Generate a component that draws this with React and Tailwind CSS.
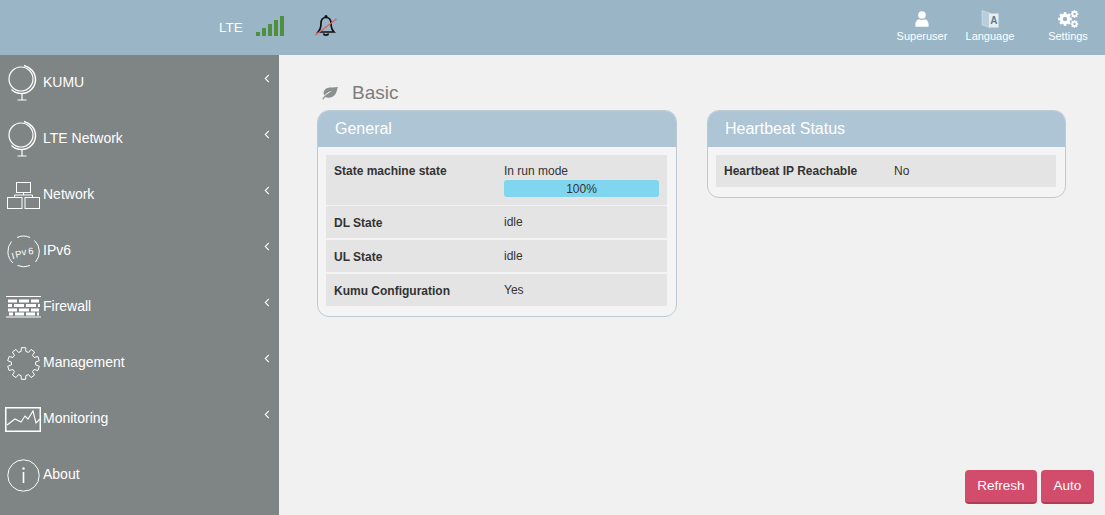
const F = { fontFamily: '"Liberation Sans", Arial, sans-serif' };

function Globe() {
  return (
    <svg width="30" height="38" viewBox="0 0 30 38" fill="none" stroke="#fff" strokeWidth="1.2">
      <circle cx="13" cy="15" r="12" />
      <path d="M16 1.500c6 1.500 11.500 6.500 11.500 14 0 8-6.500 14-14 14-4 0-7.500-1.500-10-4" strokeWidth="1.500" />
      <path d="M14 29.500V36M9.500 36h9" />
    </svg>
  );
}
function NetworkIcon() {
  return (
    <svg width="33" height="27" viewBox="0 0 33 27" fill="none" stroke="#fff" strokeWidth="1">
      <rect x="9.500" y="0.500" width="14" height="10" />
      <rect x="0.500" y="15.500" width="14.500" height="11" />
      <rect x="18" y="15.500" width="14.500" height="11" />
      <path d="M16.500 10.500v2.500M7.500 15.500V13h18v2.500" />
    </svg>
  );
}
function Ipv6Icon() {
  return (
    <svg width="33" height="33" viewBox="0 0 33 33" fill="none" stroke="#fff" strokeWidth="1">
      <path d="M10 2.500A15.500 15.500 0 0 1 23 2.500M27.500 5.500A15.500 15.500 0 0 1 28.500 27M23 30.500A15.500 15.500 0 0 1 10.500 30.500M6 28A15.500 15.500 0 0 1 4.500 6.500" />
      <text x="5.500 9 15 21.500" y="24.500 23 20.500 19.500" rotate="-14 -12 -8 -5" fill="#fff" stroke="none" fontSize="9.500" style={F}>IPv6</text>
    </svg>
  );
}
function FirewallIcon() {
  return (
    <svg width="36" height="22" viewBox="0 0 36 22">
      <rect x="0" y="0" width="35" height="1" fill="#fff" />
      <rect x="0" y="20.500" width="35" height="1" fill="#fff" />
      <g fill="#fff">
        <rect x="2" y="3.500" width="9" height="3" /><rect x="13" y="3.500" width="10" height="3" /><rect x="25" y="3.500" width="8" height="3" />
        <rect x="2" y="8" width="4" height="3" /><rect x="8" y="8" width="10" height="3" /><rect x="20" y="8" width="10" height="3" /><rect x="32" y="8" width="2" height="3" />
        <rect x="2" y="12.500" width="9" height="3" /><rect x="13" y="12.500" width="10" height="3" /><rect x="25" y="12.500" width="8" height="3" />
        <rect x="3" y="16.500" width="4" height="3" /><rect x="9" y="16.500" width="9" height="3" /><rect x="20" y="16.500" width="9" height="3" /><rect x="31" y="16.500" width="2" height="3" />
      </g>
    </svg>
  );
}
function GearOutline() {
  const pts = [];
  const n = 10, cx = 16.5, cy = 16.5, ro = 16, ri = 12.2;
  for (let i = 0; i < n; i++) {
    const a = (i / n) * Math.PI * 2 - Math.PI / 2;
    const w = 0.14, g = 0.2;
    const p = (r, t) => `${(cx + r * Math.cos(t)).toFixed(1)},${(cy + r * Math.sin(t)).toFixed(1)}`;
    pts.push(p(ri, a - g), p(ro, a - w), p(ro, a + w), p(ri, a + g));
  }
  return (
    <svg width="33" height="33" viewBox="0 0 33 33" fill="none" stroke="#fff" strokeWidth="1">
      <polygon points={pts.join(" ")} />
    </svg>
  );
}
function MonitorIcon() {
  return (
    <svg width="36" height="25" viewBox="0 0 36 25" fill="none" stroke="#fff">
      <rect x="0.750" y="0.750" width="34.500" height="23.500" strokeWidth="1.500" />
      <path d="M2 18l8-6 6 3 4-6 3 3 5-8 3 12 4-4" strokeWidth="1.100" />
    </svg>
  );
}
function InfoIcon() {
  return (
    <svg width="33" height="33" viewBox="0 0 33 33" fill="none" stroke="#fff">
      <circle cx="16.500" cy="16.500" r="15.700" strokeWidth="1" />
      <circle cx="16.500" cy="9.500" r="1.200" fill="#fff" stroke="none" />
      <rect x="15.700" y="13" width="1.600" height="11" fill="#fff" stroke="none" />
    </svg>
  );
}
function Chevron() {
  return (
    <svg width="7" height="9" viewBox="0 0 7 9" fill="none" stroke="#fff" strokeWidth="1.100">
      <path d="M4.800 0.800L1.300 4.500l3.500 3.700" />
    </svg>
  );
}
function SignalBars() {
  return (
    <svg width="30" height="21" viewBox="0 0 30 21" fill="#4f8f3f">
      <rect x="1" y="16" width="4" height="4" />
      <rect x="7" y="12" width="4" height="8" />
      <rect x="13" y="8" width="4" height="12" />
      <rect x="19" y="4" width="4" height="16" />
      <rect x="25" y="0" width="4" height="20" />
    </svg>
  );
}
function BellOff() {
  return (
    <svg width="24" height="24" viewBox="0 0 24 24" fill="none">
      <path d="M12 3.500c-3.500 0-5 2.800-5 6 0 4-1 6.500-3 8.500h16c-2-2-3-4.500-3-8.500 0-3.200-1.500-6-5-6z" stroke="#111" strokeWidth="1.700" />
      <circle cx="12" cy="2.500" r="1.500" fill="#111" />
      <path d="M9.500 19.500c.5 2.200 4.500 2.200 5 0" stroke="#111" strokeWidth="1.700" />
      <path d="M1.500 21L22.500 5" stroke="#d9605f" strokeWidth="1.500" />
    </svg>
  );
}
function UserIcon() {
  return (
    <svg width="14" height="16" viewBox="0 0 14 16" fill="#fff">
      <circle cx="7" cy="4" r="3.800" />
      <path d="M0.500 15.700c-.6-5 1.500-7.200 3.500-7.500 1.800 1 4.200 1 6 0 2 .3 4.100 2.500 3.500 7.500z" />
    </svg>
  );
}
function LangIcon() {
  return (
    <svg width="18" height="18" viewBox="0 0 18 18">
      <path d="M1 0.500l8 2.500v14.500l-8-2.500z" fill="#b8cfdb" stroke="#dfe9ee" strokeWidth="0.500" />
      <path d="M8 3.500h9.500v14H8z" fill="#e6eef2" />
      <text x="12.800" y="13.500" fontSize="10" fontWeight="700" textAnchor="middle" fill="#5f7a8a" style={F}>A</text>
    </svg>
  );
}
function GearsIcon() {
  const gear = (cx, cy, r, key) => (
    <g key={key}>
      <circle cx={cx} cy={cy} r={r * 0.55} fill="none" stroke="#fff" strokeWidth={r * 0.45} />
      {[0, 45, 90, 135].map((a) => (
        <rect key={a} x={cx - r * 0.2} y={cy - r} width={r * 0.4} height={r * 2} fill="#fff" transform={`rotate(${a} ${cx} ${cy})`} />
      ))}
      <circle cx={cx} cy={cy} r={r * 0.32} fill="#9ab6c6" />
    </g>
  );
  return (
    <svg width="21" height="18" viewBox="0 0 21 18">
      {gear(7, 9, 6.800, "a")}
      {gear(16.500, 4, 3.800, "b")}
      {gear(16.500, 14, 3.800, "c")}
    </svg>
  );
}
function Leaf() {
  return (
    <svg width="18" height="14" viewBox="0 0 18 14" fill="#8a8f8f">
      <path d="M17 .8c-4.500 1.500-10-.5-13 2.700C2 5.700 2.300 8 3.500 9.300 6 6.500 9 5.200 11.500 4.500 9 6 6 8 3 10.500L1.200 13l1 .6 2-2.500c3 1.500 7 .8 9.500-2C15.800 6.800 16 3.500 17 .8z" />
    </svg>
  );
}

const NAV = [
  ["KUMU", <Globe />, true, "pl-[8px]"],
  ["LTE Network", <Globe />, true, "pl-[8px]"],
  ["Network", <NetworkIcon />, true, "pl-[7px]"],
  ["IPv6", <Ipv6Icon />, true, "pl-[7px]"],
  ["Firewall", <FirewallIcon />, true, "pl-[6px]"],
  ["Management", <GearOutline />, true, "pl-[7px]"],
  ["Monitoring", <MonitorIcon />, true, "pl-[5px]"],
  ["About", <InfoIcon />, false, "pl-[7px]"],
];

function NavItem({ label, icon, chevron, pad }) {
  return (
    <div className={`relative flex h-14 items-center ${pad}`}>
      <div className="flex shrink-0">{icon}</div>
      <span className="absolute left-[43px] top-[18px] text-[14px] leading-[18px] text-white">{label}</span>
      {chevron && (
        <span className="absolute right-[8px] top-[19px] flex">
          <Chevron />
        </span>
      )}
    </div>
  );
}

function TopAction({ icon, label, className }) {
  return (
    <div className={`flex flex-col items-center ${className}`}>
      <div className="flex h-[19px] items-center">{icon}</div>
      <span className="mt-[1px] text-[11px] leading-[14px] text-white">{label}</span>
    </div>
  );
}

function Row({ name, value, children, tall, offset, gap }) {
  return (
    <div className={`flex bg-[#e4e4e4] ${tall ? "h-[50px]" : "h-[32px]"} ${gap}`}>
      <div className={`w-[178px] shrink-0 pl-2 text-[12px] font-bold leading-[16px] text-[#333] ${offset ? "pt-[9px]" : "pt-[8px]"}`}>{name}</div>
      <div className="w-[155px] pt-[8px] text-[12px] leading-[16px] text-[#333]">
        {value}
        {children}
      </div>
    </div>
  );
}

function Panel({ title, className, children }) {
  return (
    <div className={`overflow-hidden rounded-[12px] border border-[#bccbd3] bg-[#f4f4f4] ${className}`}>
      <div className="flex h-[36px] items-center bg-[#aec5d5] pl-[17px] text-[16px] text-white">{title}</div>
      <div className="pb-[10px] pl-2 pr-[9px] pt-[8px]">{children}</div>
    </div>
  );
}

export default function App() {
  return (
    <div className="flex h-[515px] w-[1105px] flex-col overflow-hidden bg-[#f1f1f1]" style={F}>
      <header className="flex h-[55px] shrink-0 items-start bg-[#9ab6c6]">
        <span className="ml-[219px] mt-[20px] w-[26px] text-[13.500px] leading-[16px] text-white">LTE</span>
        <span className="ml-[10px] mt-[16px] flex"><SignalBars /></span>
        <span className="ml-[29px] mt-[14px] flex"><BellOff /></span>
        <div className="ml-auto mr-[16px] mt-[9px] flex">
          <TopAction icon={<UserIcon />} label="Superuser" className="w-[52px]" />
          <TopAction icon={<LangIcon />} label="Language" className="ml-[17px] w-[50px]" />
          <TopAction icon={<GearsIcon />} label="Settings" className="ml-[32px] w-[42px]" />
        </div>
      </header>
      <div className="flex min-h-0 flex-1">
        <aside className="w-[279px] shrink-0 bg-[#7f8484]">
          {NAV.map(([label, icon, chevron, pad]) => (
            <NavItem key={label} label={label} icon={icon} chevron={chevron} pad={pad} />
          ))}
        </aside>
        <main className="flex flex-1 flex-col pl-[38px] pr-[11px]">
          <div className="flex h-[55px] shrink-0 items-start pl-[4px] pt-[30px]">
            <span className="mt-[1px] flex"><Leaf /></span>
            <span className="ml-[13px] mt-[-4px] text-[19px] leading-[24px] text-[#7d7d7d]">Basic</span>
          </div>
          <div className="flex items-start gap-[30px]">
            <Panel title="General" className="w-[360px]">
              <Row name="State machine state" value="In run mode" tall gap="mb-[1px]">
                <div className="mt-px flex h-[17px] w-[155px] items-center justify-center rounded-[3px] bg-[#7fd6ee] text-[12px] text-[#333]">100%</div>
              </Row>
              <Row name="DL State" value="idle" offset gap="mb-[2px]" />
              <Row name="UL State" value="idle" offset gap="mb-[2px]" />
              <Row name="Kumu Configuration" value="Yes" offset />
            </Panel>
            <Panel title="Heartbeat Status" className="w-[359px]">
              <Row name="Heartbeat IP Reachable" value="No" />
            </Panel>
          </div>
          <div className="mb-[11px] mt-auto flex justify-end gap-[4px]">
            <button className="h-[34px] w-[72px] rounded-[4px] border-b-2 border-[#b23c58] bg-[#d24d6b] text-[13.500px] text-white">Refresh</button>
            <button className="h-[34px] w-[53px] rounded-[4px] border-b-2 border-[#b23c58] bg-[#d24d6b] text-[13.500px] text-white">Auto</button>
          </div>
        </main>
      </div>
    </div>
  );
}
